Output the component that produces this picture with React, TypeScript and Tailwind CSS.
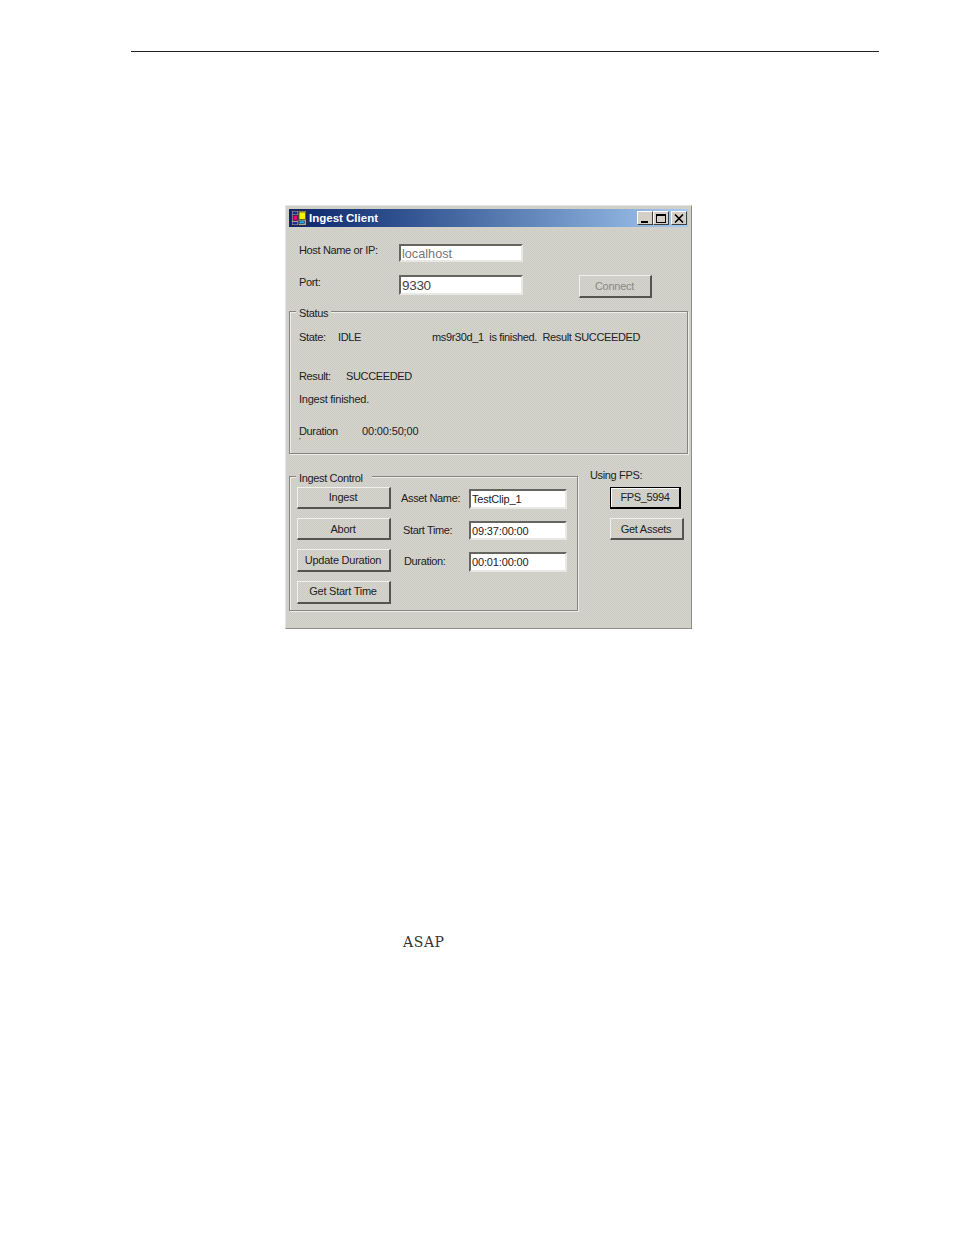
const dither = "bg-[#d0cfc8] bg-[repeating-conic-gradient(#d4d3cc_0_25%,#cccbc4_0_50%)] bg-[length:2px_2px]";
const font = { fontFamily: '"Liberation Sans", Arial, sans-serif' };

function Field({ value, w, h, className = "" }: { value: string; w: string; h: string; className?: string }) {
  return (
    <div className={`${w} ${h} ${className} flex items-center bg-white border-2 border-t-[#666660] border-l-[#666660] border-r-[#e8e8e4] border-b-[#e8e8e4] pl-px`}>
      {value}
    </div>
  );
}

function Btn({ label, w = "w-[94px]", h = "h-[22px]", disabled = false, className = "" }: { label: string; w?: string; h?: string; disabled?: boolean; className?: string }) {
  return (
    <div className={`${w} ${h} ${className} flex items-center justify-center pr-px tracking-[-0.25px] border border-t-[#f0f0ec] border-l-[#f0f0ec] border-r-[#55554f] border-b-[#55554f] border-b-2 border-r-2 ${disabled ? "text-[#8a8a84]" : "text-[#222]"}`}>
      {label}
    </div>
  );
}

function Group({ title, titleClass = "pr-[3px]", className, children }: { title: string; titleClass?: string; className: string; children: React.ReactNode }) {
  return (
    <div className={`relative border border-[#85857f] shadow-[inset_1px_1px_0_#efefea,1px_1px_0_#efefea] ${className}`}>
      <span className={`absolute left-[6px] -top-[5px] leading-[13px] pl-[3px] ${titleClass} ${dither}`}>{title}</span>
      {children}
    </div>
  );
}

function Logo() {
  return (
    <svg width="16" height="16" viewBox="0 0 16 16" className="shrink-0">
      <rect width="16" height="16" fill="#a8a89c" />
      <rect x="0.5" y="0.5" width="15" height="15" fill="none" stroke="#2a2a44" />
      <rect x="1.5" y="1.5" width="5" height="3" fill="#1c2c90" />
      <rect x="2" y="5.5" width="4.5" height="5" fill="#e8007c" stroke="#2a1030" strokeWidth="0.7" />
      <rect x="1.5" y="12" width="5" height="2.5" fill="#1c2c90" />
      <path d="M7.5 1 V15" stroke="#2a2a44" strokeWidth="0.7" />
      <rect x="8" y="2" width="6.5" height="7.5" fill="#f8f400" stroke="#3a3a10" strokeWidth="0.7" />
      <rect x="8.5" y="11" width="5" height="2.5" fill="#10b8f0" stroke="#103060" strokeWidth="0.6" />
    </svg>
  );
}

function Caption({ children }: { children: React.ReactNode }) {
  return (
    <div className="w-[16px] h-[14px] flex items-center justify-center bg-[#d4d0c8] border border-t-white border-l-white border-r-[#404040] border-b-[#404040]">
      {children}
    </div>
  );
}

export default function App() {
  return (
    <div className="w-[954px] h-[1235px] bg-white pt-[51px] text-[11px] tracking-[-0.35px] text-[#222] overflow-hidden" style={font}>
      <div className="ml-[131px] w-[748px] h-px bg-[#222]" />

      <div className={`ml-[285px] mt-[153px] w-[407px] h-[424px] ${dither} border border-[#8f8f8a] border-t-[#e4e4e0] border-l-[#e4e4e0] p-[3px]`}>
        <div className="h-[18px] flex items-center pl-[2px] pr-[1px] bg-gradient-to-r from-[#0a246a] to-[#a6caf0]">
          <Logo />
          <span className="ml-[2px] mt-[1px] text-[11.5px] tracking-normal font-bold text-white">Ingest Client</span>
          <div className="ml-auto flex items-center">
            <Caption><div className="w-[7px] h-[2px] bg-black mt-[7px] mr-[1px]" /></Caption>
            <Caption><div className="w-[10px] h-[9px] border border-black border-t-2" /></Caption>
            <div className="ml-[2px]">
              <Caption>
                <svg width="10" height="9" viewBox="0 0 10 9"><path d="M1 0.5 L9 8.5 M9 0.5 L1 8.5" stroke="#000" strokeWidth="1.6" /></svg>
              </Caption>
            </div>
          </div>
        </div>

        <div className="flex items-start mt-[17px] pl-[10px]">
          <span className="w-[100px] leading-[14px] -mt-[1px]">Host Name or IP:</span>
          <Field value="localhost" w="w-[124px]" h="h-[18px]" className="text-[#777] text-[12.7px] leading-[14px] tracking-normal pt-[2px]" />
        </div>

        <div className="flex items-start mt-[13px] pl-[10px]">
          <span className="w-[100px] leading-[14px]">Port:</span>
          <Field value="9330" w="w-[124px]" h="h-[20px]" className="text-[#444] text-[13.5px] leading-[14px] tracking-[-0.3px] pl-[2px] pt-px" />
          <div className="ml-[56px]">
            <Btn label="Connect" w="w-[73px]" h="h-[23px]" disabled />
          </div>
        </div>

        <Group title="Status" className="mt-[13px] h-[143px] w-[399px] pl-[9px]">
          <div className="flex mt-[18px] leading-[14px]">
            <span className="w-[39px]">State:</span>
            <span className="w-[94px]">IDLE</span>
            <span className="whitespace-pre">ms9r30d_1  is finished.  Result SUCCEEDED</span>
          </div>
          <div className="flex mt-[25px] leading-[14px]">
            <span className="w-[47px]">Result:</span>
            <span>SUCCEEDED</span>
          </div>
          <div className="mt-[9px] leading-[14px] tracking-[-0.25px]">Ingest finished.</div>
          <div className="flex mt-[18px] leading-[14px]">
            <span className="w-[63px]">Duration</span>
            <span className="tracking-[-0.15px]">00:00:50;00</span>
          </div>
          <div className="leading-[6px] text-[8px]">'</div>
        </Group>

        <div className="flex items-start mt-[22px]">
          <Group title="Ingest Control" titleClass="pr-[9px]" className="w-[289px] h-[135px] pl-[7px] pt-[10px] flex gap-[6px]">
            <div className="flex flex-col gap-[9px]">
              <Btn label="Ingest" />
              <Btn label="Abort" className="pt-px" />
              <Btn label="Update Duration" h="h-[23px]" />
              <Btn label="Get Start Time" h="h-[23px]" className="pb-px" />
            </div>
            <div className="grid grid-cols-[72px_98px] auto-rows-min mt-[2px] gap-y-[12px] items-center whitespace-nowrap">
              <span className="pl-[4px] pb-[2px]">Asset Name:</span>
              <Field value="TestClip_1" w="w-[98px]" h="h-[20px]" className="tracking-[-0.2px] pl-[2px]" />
              <span className="pl-[6px]">Start Time:</span>
              <Field value="09:37:00:00" w="w-[98px]" h="h-[19px]" className="tracking-[-0.15px] pt-px" />
              <span className="pl-[7px] pb-[2px]">Duration:</span>
              <Field value="00:01:00:00" w="w-[98px]" h="h-[20px]" className="tracking-[-0.15px]" />
            </div>
          </Group>
          <div className="ml-[12px] -mt-[8px]">
            <div className="leading-[14px]">Using FPS:</div>
            <div className="ml-[20px] mt-[5px] flex flex-col gap-[9px]">
              <div className="w-[71px] h-[22px] flex items-center justify-center border border-black border-r-2 border-b-2 shadow-[inset_1px_1px_0_#fff]">FPS_5994</div>
              <Btn label="Get Assets" w="w-[74px]" className="pt-px" />
            </div>
          </div>
        </div>
      </div>

      <div className="ml-[403px] mt-[305px] text-[14px] leading-[16px] tracking-[0.6px] text-[#333]" style={{ fontFamily: '"DejaVu Serif", serif' }}>ASAP</div>
    </div>
  );
}
